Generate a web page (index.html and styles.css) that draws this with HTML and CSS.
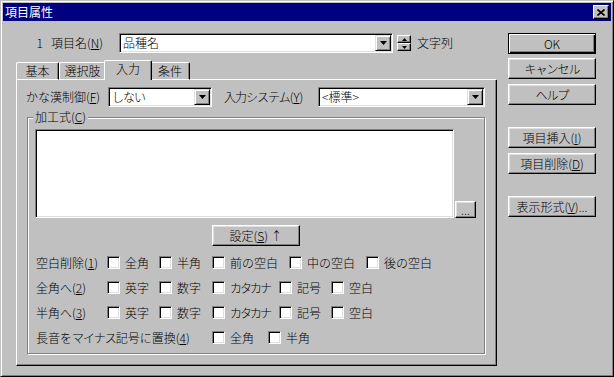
FILE: index.html
```html
<!DOCTYPE html>
<html lang="ja">
<head>
    <meta charset="UTF-8">
    <meta name="viewport" content="width=device-width, initial-scale=1.0">
    <title>項目属性</title>
    <link rel="stylesheet" href="styles.css">
</head>
<body>
<div class="window">
    <div class="titlebar">
        <span class="title">項目属性</span>
        <button class="close" aria-label="閉じる">
            <svg width="8" height="7" viewBox="0 0 8 7"><path d="M0.5 0.5L7.5 6.5M7.5 0.5L0.5 6.5" stroke="#000" stroke-width="1.6" fill="none"/></svg>
        </button>
    </div>

    <div class="client">
        <div class="main">
            <div class="name-row">
                <span class="num">1</span>
                <span class="name-label">項目名(<u>N</u>)</span>
                <div class="combo combo-name">
                    <span class="combo-value">品種名</span>
                    <span class="drop"><svg width="7" height="4" viewBox="0 0 7 4"><polygon points="0,0 7,0 3.5,4" fill="#000"/></svg></span>
                </div>
                <div class="spin">
                    <span class="spin-btn"><svg width="5" height="3" viewBox="0 0 5 3"><polygon points="2.5,0 5,3 0,3" fill="#000"/></svg></span>
                    <span class="spin-btn"><svg width="5" height="3" viewBox="0 0 5 3"><polygon points="0,0 5,0 2.5,3" fill="#000"/></svg></span>
                </div>
                <span class="type">文字列</span>
            </div>

            <div class="tabs">
                <div class="tab tab-basic">基本</div>
                <div class="tab tab-choice">選択肢</div>
                <div class="tab tab-input active">入力</div>
                <div class="tab tab-cond">条件</div>
                <div class="tab-fill"></div>
            </div>

            <div class="panel">
                <div class="ime-row">
                    <span class="ime-label">かな漢制御(<u>F</u>)</span>
                    <div class="combo combo-kana">
                        <span class="combo-value kana">しない</span>
                        <span class="drop"><svg width="7" height="4" viewBox="0 0 7 4"><polygon points="0,0 7,0 3.5,4" fill="#000"/></svg></span>
                    </div>
                    <span class="sys-label"><span class="kana">入力システム</span>(<u>Y</u>)</span>
                    <div class="combo combo-sys">
                        <span class="combo-value">&lt;標準&gt;</span>
                        <span class="drop"><svg width="7" height="4" viewBox="0 0 7 4"><polygon points="0,0 7,0 3.5,4" fill="#000"/></svg></span>
                    </div>
                </div>

                <fieldset class="group">
                    <legend>加工式(<u>C</u>)</legend>
                    <div class="expr-row">
                        <textarea class="memo"></textarea>
                        <button class="btn btn-dots">...</button>
                    </div>
                    <div class="set-row">
                        <button class="btn">設定(<u>S</u>) ↑</button>
                    </div>

                    <div class="opt-row row-a">
                        <span>空白削除(<u>1</u>)</span>
                        <label class="chk"><span class="box"></span>全角</label>
                        <label class="chk"><span class="box"></span>半角</label>
                        <label class="chk"><span class="box"></span>前の空白</label>
                        <label class="chk"><span class="box"></span>中の空白</label>
                        <label class="chk"><span class="box"></span>後の空白</label>
                    </div>
                    <div class="opt-row row-b">
                        <span>全角へ(<u>2</u>)</span>
                        <label class="chk"><span class="box"></span>英字</label>
                        <label class="chk"><span class="box"></span>数字</label>
                        <label class="chk"><span class="box"></span><span class="kata">カタカナ</span></label>
                        <label class="chk"><span class="box"></span>記号</label>
                        <label class="chk"><span class="box"></span>空白</label>
                    </div>
                    <div class="opt-row row-b">
                        <span>半角へ(<u>3</u>)</span>
                        <label class="chk"><span class="box"></span>英字</label>
                        <label class="chk"><span class="box"></span>数字</label>
                        <label class="chk"><span class="box"></span><span class="kata">カタカナ</span></label>
                        <label class="chk"><span class="box"></span>記号</label>
                        <label class="chk"><span class="box"></span>空白</label>
                    </div>
                    <div class="opt-row row-c">
                        <span>長音を<span class="kana">マイナス</span>記号に置換(<u>4</u>)</span>
                        <label class="chk"><span class="box"></span>全角</label>
                        <label class="chk"><span class="box"></span>半角</label>
                    </div>
                </fieldset>
            </div>
        </div>

        <div class="side">
            <button class="btn btn-default">OK</button>
            <button class="btn btn-cancel"><span class="kana">キャンセル</span></button>
            <button class="btn btn-help"><span class="kana">ヘルプ</span></button>
            <button class="btn btn-insert">項目挿入(<u>I</u>)</button>
            <button class="btn btn-delete">項目削除(<u>D</u>)</button>
            <button class="btn btn-format">表示形式(<u>V</u>)...</button>
        </div>
    </div>
</div>
</body>
</html>
```

FILE: styles.css
```css
body {
    margin: 0;
    background: #c0c0c0;
    font-family: "Noto Sans CJK JP", "Noto Sans", sans-serif;
    font-size: 12px;
    font-weight: 300;
    line-height: 14px;
    color: #000;
}

u {
    text-underline-offset: 1px;
}

/* MS UI Gothic draws kana narrower than kanji */
.kana {
    letter-spacing: -1px;
}

.kata {
    letter-spacing: -2px;
}

.window {
    width: 614px;
    height: 377px;
    box-sizing: border-box;
    border: 1px solid;
    border-color: #c0c0c0 #000 #000 #c0c0c0;
    box-shadow: inset 1px 1px #fff, inset -1px -1px #808080;
    padding: 2px;
    background: #c0c0c0;
}

.titlebar {
    height: 18px;
    background: #000080;
    color: #fff;
    display: flex;
    align-items: center;
    justify-content: space-between;
    padding: 0 2px 0 2px;
}

.title {
    font-size: 12px;
    font-weight: 400;
}

.close {
    width: 16px;
    height: 14px;
    padding: 0;
    box-sizing: border-box;
    display: flex;
    align-items: center;
    justify-content: center;
    background: #c0c0c0;
    border: 1px solid;
    border-color: #fff #000 #000 #fff;
    box-shadow: inset -1px -1px #808080;
}

.client {
    display: flex;
    padding-top: 12px;
}

.main {
    margin-left: 13px;
    width: 481px;
}

.side {
    margin-left: 11px;
    width: 88px;
    display: flex;
    flex-direction: column;
}

/* buttons */
.btn {
    font: inherit;
    color: #000;
    padding: 0;
    height: 21px;
    box-sizing: border-box;
    background: #c0c0c0;
    border: 1px solid;
    border-color: #fff #000 #000 #fff;
    box-shadow: inset -1px -1px #808080, inset 1px 1px #dfdfdf;
    width: 88px;
}

.btn-default {
    border-color: #000;
    box-shadow: inset 1px 1px #fff, inset -1px -1px #000, inset -2px -2px #808080;
}

.btn-cancel { margin-top: 4px; }
.btn-help { margin-top: 5px; }
.btn-insert { margin-top: 22px; }
.btn-delete { margin-top: 5px; }
.btn-format { margin-top: 22px; }

/* combo boxes */
.combo {
    height: 20px;
    box-sizing: border-box;
    display: flex;
    align-items: stretch;
    background: #fff;
    border: 1px solid;
    border-color: #808080 #fff #fff #808080;
    box-shadow: inset 1px 1px #000, inset -1px -1px #dfdfdf;
    padding: 1px 1px 1px 2px;
}

.combo-value {
    flex: 1;
    line-height: 16px;
    padding-left: 1px;
    white-space: nowrap;
}

.drop {
    width: 16px;
    box-sizing: border-box;
    display: flex;
    align-items: center;
    justify-content: center;
    background: #c0c0c0;
    border: 1px solid;
    border-color: #dfdfdf #000 #000 #dfdfdf;
    box-shadow: inset 1px 1px #fff, inset -1px -1px #808080;
}

.name-row {
    display: flex;
    align-items: center;
    height: 20px;
}

.num {
    width: 27px;
    text-align: right;
}

.name-label {
    margin-left: 8px;
    width: 68px;
}

.combo-name {
    width: 274px;
}

.spin {
    margin-left: 4px;
    width: 14px;
    height: 16px;
    display: flex;
    flex-direction: column;
}

.spin-btn {
    flex: 1;
    display: flex;
    align-items: center;
    justify-content: center;
    background: #c0c0c0;
    box-sizing: border-box;
    border: 1px solid;
    border-color: #fff #000 #000 #fff;
    box-shadow: inset -1px -1px #808080;
}

.type {
    margin-left: 6px;
}

/* tabs */
.tabs {
    margin-top: 7px;
    height: 20px;
    display: flex;
    align-items: flex-end;
}

.tab {
    height: 18px;
    box-sizing: border-box;
    border-top: 1px solid #fff;
    border-left: 1px solid #fff;
    border-right: 1px solid #000;
    border-bottom: 1px solid #fff;
    border-radius: 2px 2px 0 0;
    box-shadow: inset -1px 0 #808080;
    background: #c0c0c0;
    text-align: center;
    line-height: 15px;
}

.tab-basic { width: 43px; }
.tab-choice { width: 47px; }
.tab-cond { width: 40px; }

.tab.active {
    width: 48px;
    height: 20px;
    margin: 0 -2px;
    border-bottom: none;
    position: relative;
    z-index: 1;
    line-height: 16px;
    padding-bottom: 2px;
}

.tab-fill {
    flex: 1;
    margin-right: 1px;
    border-bottom: 1px solid #fff;
}

.panel {
    height: 286px;
    box-sizing: border-box;
    border-left: 1px solid #fff;
    border-right: 1px solid #000;
    border-bottom: 1px solid #000;
    box-shadow: inset -1px -1px #808080;
    padding: 7px 0 0 9px;
}

.ime-row {
    display: flex;
    align-items: center;
    height: 20px;
}

.ime-label {
    width: 82px;
}

.combo-kana {
    width: 104px;
}

.sys-label {
    margin-left: 12px;
    width: 94px;
}

.combo-sys {
    width: 167px;
}

/* group box */
.group {
    margin: 3px 11px 0 1px;
    padding: 5px 7px 3px 7px;
    border: 1px solid #808080;
    box-shadow: inset 1px 1px #fff, 1px 1px #fff;
    min-width: 0;
}

.group legend {
    padding: 0 2px;
    margin-left: -2px;
    background: #c0c0c0;
    line-height: 14px;
}

.expr-row {
    display: flex;
    align-items: flex-end;
}

.memo {
    display: block;
    width: 419px;
    height: 89px;
    box-sizing: border-box;
    margin: 0;
    padding: 0;
    resize: none;
    background: #fff;
    border: 1px solid;
    border-color: #808080 #fff #fff #808080;
    box-shadow: inset 1px 1px #000, inset -1px -1px #dfdfdf;
    outline: none;
}

.btn-dots {
    width: 21px;
    height: 17px;
    margin-left: 1px;
    line-height: 10px;
}

.set-row {
    display: flex;
    justify-content: center;
    margin-top: 7px;
}

.opt-row {
    display: grid;
    align-items: center;
    height: 25px;
    padding-left: 1px;
}

.row-a {
    margin-top: 4px;
    grid-template-columns: 71px 52px 53px 77px 77px auto;
}

.row-b {
    grid-template-columns: 71px 52px 53px 67px 52px auto;
}

.row-c {
    grid-template-columns: 176px 56px auto;
}

.chk {
    display: flex;
    align-items: center;
    gap: 5px;
    white-space: nowrap;
}

.box {
    width: 13px;
    height: 13px;
    box-sizing: border-box;
    background: #fff;
    border: 1px solid;
    border-color: #808080 #fff #fff #808080;
    box-shadow: inset 1px 1px #000, inset -1px -1px #dfdfdf;
}
```
